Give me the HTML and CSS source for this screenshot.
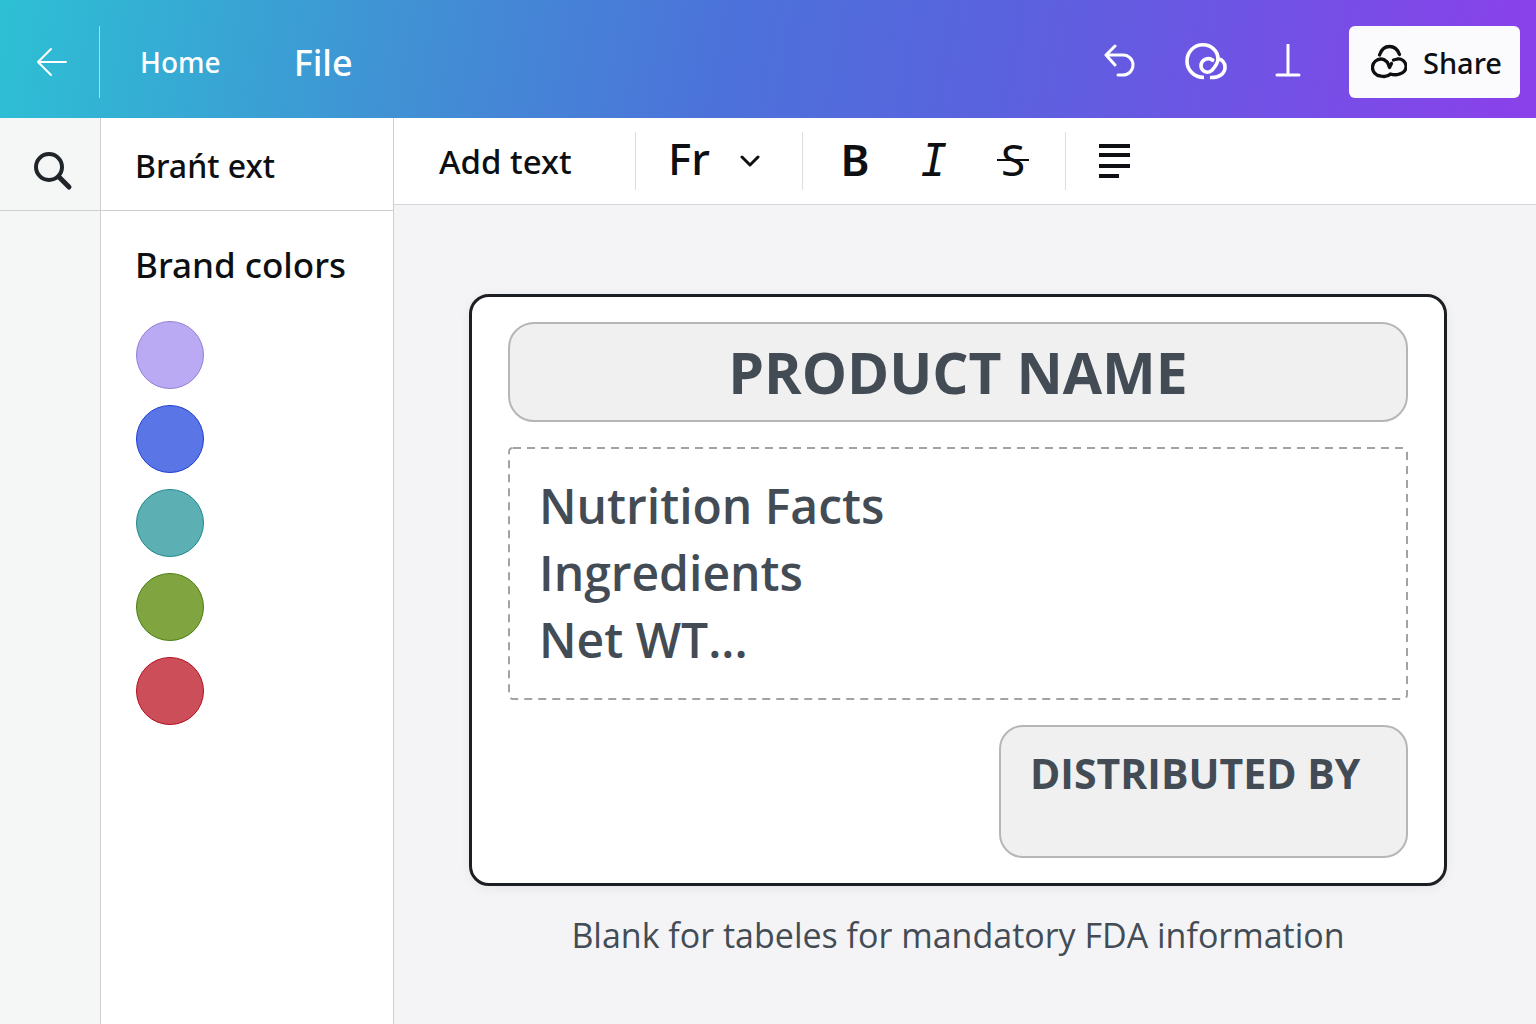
FILE: index.html
```html
<!DOCTYPE html>
<html lang="en">
<head>
  <meta charset="UTF-8">
  <meta name="viewport" content="width=device-width, initial-scale=1">
  <title>Label Editor</title>
  <link rel="stylesheet" href="styles.css">
</head>
<body>
  <header class="topbar">
    <a class="back" href="#" aria-label="Back">
      <svg width="32" height="32" viewBox="0 0 32 32">
        <path d="M30 16H2M15 3L2 16l13 13" fill="none" stroke="currentColor" stroke-width="2" stroke-linecap="round" stroke-linejoin="round"/>
      </svg>
    </a>
    <nav class="menu">
      <a class="home" href="#">Home</a>
      <a class="file" href="#">File</a>
    </nav>
    <div class="actions">
      <button type="button" class="icon-btn" aria-label="Undo">
        <svg width="34" height="36" viewBox="0 0 34 36">
          <path d="M11 2L2 11l9 10M2 11h17a10 10 0 0 1 0 20h-5" fill="none" stroke="currentColor" stroke-width="3" stroke-linecap="round" stroke-linejoin="round"/>
        </svg>
      </button>
      <button type="button" class="icon-btn" aria-label="Sync">
        <svg width="42" height="38" viewBox="0 0 42 38">
          <path d="M19 34.500C9 34.500 2 27 2 18C2 9 9 1.800 18 1.800c8 0 15 6 15 14c0 5-3 8-6 11.500c-4 4-11 1-11-4.500c0-5 5-8 9-7l4 2M33 15.500c4 1 7 4 7 9c0 6-6 10.500-15 10" fill="none" stroke="currentColor" stroke-width="3.600"/>
        </svg>
      </button>
      <button type="button" class="icon-btn" aria-label="Download">
        <svg width="28" height="36" viewBox="0 0 28 36">
          <path d="M14 1v30M3 31h22" fill="none" stroke="currentColor" stroke-width="3" stroke-linecap="round"/>
        </svg>
      </button>
      <button type="button" class="share">
        <svg width="36" height="36" viewBox="0 0 36 36">
          <g fill="none" stroke="currentColor" stroke-width="3.300" stroke-linecap="round" stroke-linejoin="round">
            <path d="M8.500 11c2-6 5-8.500 10-8.500s8 2.500 10 8"/>
            <path d="M15.500 17.500c-2-2-3-2.500-5-2.500a8.500 8.500 0 0 0-1 17c4 1 8 0 10-2c3 1 6 1 9 0a7.500 7.500 0 0 0-2-15l-4 1"/>
            <path d="M16.500 18.500l2 5l2-4"/>
          </g>
        </svg>
        Share
      </button>
    </div>
  </header>

  <div class="workspace">
    <aside class="rail">
      <button type="button" class="search" aria-label="Search">
        <svg width="40" height="40" viewBox="0 0 40 40">
          <circle cx="16" cy="16" r="13" fill="none" stroke="currentColor" stroke-width="4"/>
          <path d="M26 26l10 10" stroke="currentColor" stroke-width="5" stroke-linecap="round"/>
        </svg>
      </button>
    </aside>

    <aside class="panel">
      <h2 class="panel-title">Brańt ext</h2>
      <section class="brand">
        <h3>Brand colors</h3>
        <div class="swatches">
          <button type="button" class="swatch lavender" aria-label="Lavender"></button>
          <button type="button" class="swatch blue" aria-label="Blue"></button>
          <button type="button" class="swatch teal" aria-label="Teal"></button>
          <button type="button" class="swatch green" aria-label="Green"></button>
          <button type="button" class="swatch red" aria-label="Red"></button>
        </div>
      </section>
    </aside>

    <main class="editor">
      <div class="toolbar">
        <button type="button" class="add-text">Add text</button>
        <div class="font-picker">
          <select aria-label="Font">
            <option>Fr</option>
          </select>
          <svg class="chevron" width="20" height="12" viewBox="0 0 20 12">
            <path d="M2 2l8 8l8-8" fill="none" stroke="currentColor" stroke-width="3" stroke-linecap="round" stroke-linejoin="round"/>
          </svg>
        </div>
        <div class="styles">
          <button type="button" class="bold" aria-label="Bold">B</button>
          <button type="button" class="italic" aria-label="Italic">I</button>
          <button type="button" class="strike" aria-label="Strikethrough">S</button>
        </div>
        <button type="button" class="align" aria-label="Align left">
          <svg width="32" height="36" viewBox="0 0 32 36">
            <path d="M1 3h31M1 12h31M1 23h31M1 33h20" stroke="currentColor" stroke-width="4"/>
          </svg>
        </button>
      </div>

      <div class="canvas">
        <article class="label">
          <h1 class="product">PRODUCT NAME</h1>
          <div class="facts">
            <svg class="dashes" width="100%" height="100%">
              <rect x="1" y="1" rx="4" fill="none"/>
            </svg>
            <p>Nutrition Facts</p>
            <p>Ingredients</p>
            <p>Net WT...</p>
          </div>
          <div class="distributor">DISTRIBUTED BY</div>
        </article>
        <p class="caption">Blank for tabeles for mandatory FDA information</p>
      </div>
    </main>
  </div>
</body>
</html>
```
FILE: styles.css
```css
* {
  box-sizing: border-box;
}

body {
  margin: 0;
  min-height: 100vh;
  display: flex;
  flex-direction: column;
  font-family: "Noto Sans", "Open Sans", sans-serif;
  font-weight: 500;
  color: #0d0f12;
}

h1, h2, h3, p {
  margin: 0;
  font-weight: 500;
}

button, select {
  padding: 0;
  border: none;
  background: none;
  font: inherit;
  color: inherit;
  cursor: pointer;
}

a {
  color: inherit;
  text-decoration: none;
}

svg {
  display: block;
}

/* Top bar */
.topbar {
  display: flex;
  align-items: center;
  height: 118px;
  padding: 14px 16px 8px 0;
  color: #fff;
  background: linear-gradient(100deg, #2dc0d4 0%, #4190d4 27%, #4c72da 47%, #5a62de 65%, #7450e6 84%, #8b40ea 100%);
}

.back {
  display: flex;
  align-items: center;
  justify-content: center;
  width: 100px;
  height: 72px;
  padding-left: 4px;
  border-right: 1px solid #9fdcec;
}

.menu {
  display: flex;
  align-items: center;
  gap: 73px;
  padding-left: 40px;
}

.home {
  font-size: 28px;
}

.file {
  font-size: 36px;
}

.actions {
  display: flex;
  align-items: center;
  margin-left: auto;
  gap: 47px;
}

.share {
  display: flex;
  align-items: center;
  gap: 16px;
  height: 72px;
  padding: 0 18px 0 22px;
  border-radius: 6px;
  background: #fbfafd;
  color: #0d0f12;
  font-size: 29px;
}

/* Columns */
.workspace {
  flex: 1;
  display: grid;
  grid-template-columns: 101px 293px 1fr;
}

.rail {
  background: #f5f6f6;
  border-right: 1px solid #cfcfcf;
}

.search {
  display: flex;
  align-items: center;
  justify-content: center;
  width: 100%;
  height: 93px;
  padding: 14px 0 0 6px;
  border-bottom: 1px solid #cfcfcf;
  color: #1f2529;
}

.panel {
  background: #fff;
  border-right: 1px solid #cfcfcf;
}

.panel-title {
  height: 93px;
  padding-left: 34px;
  border-bottom: 1px solid #cfcfcf;
  font-size: 32px;
  line-height: 96px;
}

.brand {
  padding: 32px 34px;
}

.brand h3 {
  font-size: 35px;
  line-height: 44px;
}

.swatches {
  display: flex;
  flex-direction: column;
  gap: 16px;
  padding: 34px 0 0 1px;
}

.swatch {
  width: 68px;
  height: 68px;
  border: 1px solid;
  border-radius: 50%;
}

.lavender {
  background: #baaaf3;
  border-color: #9480d4;
}

.blue {
  background: #5a75e6;
  border-color: #1f3fd0;
}

.teal {
  background: #5cb0b4;
  border-color: #20888f;
}

.green {
  background: #7fa440;
  border-color: #4a7f10;
}

.red {
  background: #cb4e58;
  border-color: #b41020;
}

/* Toolbar */
.toolbar {
  display: flex;
  align-items: center;
  height: 87px;
  background: #fff;
  border-bottom: 1px solid #d6d6d8;
}

.add-text {
  width: 242px;
  height: 58px;
  padding-left: 45px;
  border-right: 1px solid #dddddf;
  text-align: left;
  font-size: 33px;
}

.font-picker {
  position: relative;
  width: 167px;
  height: 58px;
  border-right: 1px solid #dddddf;
}

.font-picker select {
  appearance: none;
  width: 100%;
  height: 100%;
  padding: 0 0 6px 32px;
  font-size: 44px;
  line-height: 52px;
}

.chevron {
  position: absolute;
  right: 42px;
  top: 23px;
  pointer-events: none;
}

.styles {
  display: flex;
  align-items: baseline;
  justify-content: space-between;
  width: 263px;
  height: 58px;
  padding: 0 36px;
  border-right: 1px solid #dddddf;
  font-size: 44px;
  line-height: 54px;
}

.styles button {
  width: 32px;
}

.bold {
  font-weight: 600;
}

.italic {
  font-family: "DejaVu Sans Mono", monospace;
  font-style: italic;
}

.strike {
  position: relative;
  font-weight: 400;
}

.strike::after {
  content: "";
  position: absolute;
  left: 0;
  right: 0;
  top: 50%;
  height: 2px;
  background: currentColor;
}

.align {
  padding-left: 32px;
}

/* Canvas */
.editor {
  display: flex;
  flex-direction: column;
}

.canvas {
  flex: 1;
  padding: 89px 89px 64px 75px;
  background: #f4f4f7;
  font-family: "Open Sans", "Noto Sans", sans-serif;
}

.label {
  display: flex;
  flex-direction: column;
  gap: 25px;
  padding: 25px 36px;
  background: #fff;
  border: 3px solid #1b1e23;
  border-radius: 20px;
  box-shadow: 0 2px 12px rgba(0, 0, 0, 0.06);
  color: #434c55;
}

.product {
  border: 2px solid #b6b6b6;
  border-radius: 26px;
  background: #f0f0f0;
  text-align: center;
  font-size: 57px;
  line-height: 96px;
  font-weight: 700;
}

.facts {
  position: relative;
  padding: 25px 31px 27px;
  font-size: 48px;
  line-height: 67px;
}

.facts p {
  font-weight: 600;
}

.dashes {
  position: absolute;
  inset: 0;
}

.dashes rect {
  width: calc(100% - 2px);
  height: calc(100% - 2px);
  stroke: #a3a3a3;
  stroke-width: 2;
  stroke-dasharray: 8 6;
}

.distributor {
  align-self: flex-end;
  width: 409px;
  height: 133px;
  padding: 18px 29px;
  border: 2px solid #b6b6b6;
  border-radius: 24px;
  background: #f0f0f0;
  font-size: 41px;
  line-height: 56px;
  font-weight: 700;
}

.caption {
  padding-top: 24px;
  text-align: center;
  font-size: 34px;
  line-height: 50px;
  font-weight: 400;
  color: #434c55;
}
```
